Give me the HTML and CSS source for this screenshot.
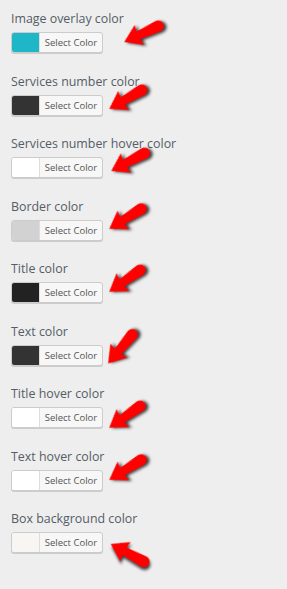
FILE: index.html
```html
<!DOCTYPE html>
<html lang="en">
<head>
  <meta charset="UTF-8">
  <title>Color settings</title>
  <link rel="stylesheet" href="styles.css">
</head>
<body>

<svg width="0" height="0" class="defs">
  <defs>
    <path id="arrow" d="M1 12 L17 1.5 L16 8 L37 6.5 A5.5 5.5 0 0 1 37 17.5 L16 16 L17 22.5 Z"/>
  </defs>
</svg>

<div class="panel">

  <!-- one row per color setting -->
  <div class="field">
    <div class="label">Image overlay color</div>
    <div class="picker"><span class="swatch" style="background:#1fb7c7"></span><span class="btn-text">Select Color</span></div>
    <svg class="arrow a1" viewBox="0 0 44 24"><use href="#arrow"/></svg>
  </div>

  <div class="field">
    <div class="label">Services number color</div>
    <div class="picker"><span class="swatch" style="background:#333"></span><span class="btn-text">Select Color</span></div>
    <svg class="arrow a2" viewBox="0 0 44 24"><use href="#arrow"/></svg>
  </div>

  <div class="field">
    <div class="label">Services number hover color</div>
    <div class="picker"><span class="swatch" style="background:#fff"></span><span class="btn-text">Select Color</span></div>
    <svg class="arrow a3" viewBox="0 0 44 24"><use href="#arrow"/></svg>
  </div>

  <div class="field">
    <div class="label">Border color</div>
    <div class="picker"><span class="swatch" style="background:#d2d2d2"></span><span class="btn-text">Select Color</span></div>
    <svg class="arrow a4" viewBox="0 0 44 24"><use href="#arrow"/></svg>
  </div>

  <div class="field">
    <div class="label">Title color</div>
    <div class="picker"><span class="swatch" style="background:#222"></span><span class="btn-text">Select Color</span></div>
    <svg class="arrow a5" viewBox="0 0 44 24"><use href="#arrow"/></svg>
  </div>

  <div class="field">
    <div class="label">Text color</div>
    <div class="picker"><span class="swatch" style="background:#333"></span><span class="btn-text">Select Color</span></div>
    <svg class="arrow a6" viewBox="0 0 44 24"><use href="#arrow"/></svg>
  </div>

  <div class="field">
    <div class="label">Title hover color</div>
    <div class="picker"><span class="swatch" style="background:#fff"></span><span class="btn-text">Select Color</span></div>
    <svg class="arrow a7" viewBox="0 0 44 24"><use href="#arrow"/></svg>
  </div>

  <div class="field">
    <div class="label">Text hover color</div>
    <div class="picker"><span class="swatch" style="background:#fff"></span><span class="btn-text">Select Color</span></div>
    <svg class="arrow a8" viewBox="0 0 44 24"><use href="#arrow"/></svg>
  </div>

  <div class="field">
    <div class="label">Box background color</div>
    <div class="picker"><span class="swatch" style="background:#f7f6f2"></span><span class="btn-text">Select Color</span></div>
    <svg class="arrow a9" viewBox="0 0 44 24"><use href="#arrow"/></svg>
  </div>

</div>

</body>
</html>
```

FILE: styles.css
```css
/* reset */
* {
  margin: 0;
  padding: 0;
  box-sizing: border-box;
}

body {
  background-color: #eee;
  font-family: "Open Sans", Arial, sans-serif;
  color: #555d66;
  min-height: 100vh;
}

.defs {
  position: absolute;
}

/* settings column */
.panel {
  padding: 10px 0 0 11px;
}

.field {
  position: relative;
  height: 62.5px;
}

.label {
  font-size: 12.4px;
  line-height: 18px;
  margin-bottom: 4px;
  white-space: nowrap;
}

/* color picker button */
.picker {
  display: flex;
  width: 92px;
  height: 21px;
  background-color: #f7f7f7;
  border: 1px solid #ccc;
  border-radius: 3px;
  box-shadow: 0 1px 0 #ccc;
  overflow: hidden;
}

.swatch {
  width: 28px;
  height: 100%;
  border-right: 1px solid #ddd;
}

.btn-text {
  flex: 1;
  font-size: 9.5px;
  line-height: 19px;
  color: #555;
  text-align: center;
}

/* red annotation arrows */
.arrow {
  position: absolute;
  width: 46px;
  height: 25px;
  fill: #f00;
  filter: drop-shadow(2px 2px 1.5px rgba(0, 0, 0, 0.75));
  transform-origin: 0 12px;
}

.a1 { left: 112px; top: 20px; transform: rotate(-25deg); }
.a2 { left: 97px;  top: 24px; transform: rotate(-30deg); }
.a3 { left: 99px;  top: 24px; transform: rotate(-28deg); }
.a4 { left: 97px;  top: 19px; transform: rotate(-32deg); }
.a5 { left: 97px;  top: 20px; transform: rotate(-35deg); }
.a6 { left: 96px;  top: 29px; transform: rotate(-50deg); }
.a7 { left: 97px;  top: 31px; transform: rotate(-35deg); }
.a8 { left: 97px;  top: 20px; transform: rotate(-32deg); }
.a9 { left: 99px;  top: 21px; transform: rotate(28deg); }
```
